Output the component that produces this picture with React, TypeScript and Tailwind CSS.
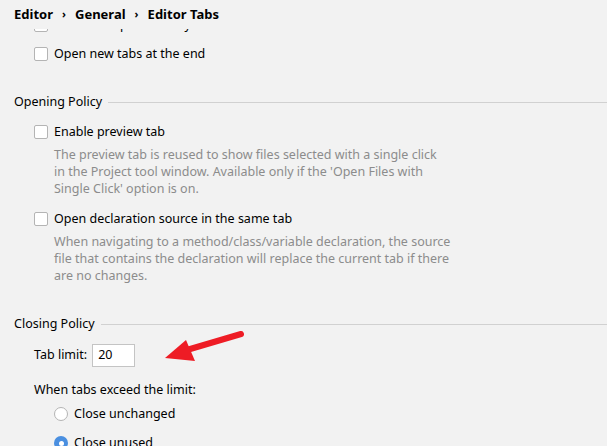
import React from "react";

function Checkbox() {
  return <div className="w-[14px] h-[14px] rounded-[2px] border border-[#b4b4b4] bg-white shrink-0" />;
}

function CheckRow({ label, className = "" }: { label: string; className?: string }) {
  return (
    <div className={`flex items-center h-[20px] pl-[34px] ${className}`}>
      <Checkbox />
      <span className="ml-[6px] text-black whitespace-nowrap">{label}</span>
    </div>
  );
}

function SectionTitle({ label, className = "" }: { label: string; className?: string }) {
  return (
    <div className={`flex items-center h-[20px] pl-[14px] ${className}`}>
      <span className="text-black whitespace-nowrap">{label}</span>
      <div className="flex-1 h-px bg-[#d1d1d1] ml-[6px]" />
    </div>
  );
}

function Desc({ lines, className = "" }: { lines: string[]; className?: string }) {
  return (
    <div className={`pl-[54px] text-[#8c8c8c] leading-[17px] ${className}`}>
      {lines.map((l) => (
        <div key={l} className="whitespace-nowrap">{l}</div>
      ))}
    </div>
  );
}

function Radio({ checked }: { checked?: boolean }) {
  if (checked) {
    return (
      <div className="w-[14px] h-[14px] rounded-full bg-[#4a8fe0] flex items-center justify-center shrink-0">
        <div className="w-[5px] h-[5px] rounded-full bg-white" />
      </div>
    );
  }
  return <div className="w-[14px] h-[14px] rounded-full border border-[#b4b4b4] bg-white shrink-0" />;
}

export default function App() {
  return (
    <div
      className="relative w-[607px] h-[446px] bg-[#f2f2f2] overflow-hidden flex flex-col text-[12.5px]"
      style={{ fontFamily: '"Noto Sans", "Noto Sans CJK SC", sans-serif' }}
    >
      <div className="h-[29px] shrink-0 flex items-center pl-[14px] font-bold text-black text-[13px] bg-[#f2f2f2]">
        <span>Editor</span>
        <span className="mx-[9px] text-[11px]">›</span>
        <span>General</span>
        <span className="mx-[9px] text-[11px]">›</span>
        <span>Editor Tabs</span>
      </div>
      <div className="flex-1 overflow-hidden">
        <div className="mt-[-14px]">
          <CheckRow label="Sort tabs alphabetically" className="text-[#8c8c8c]" />
          <CheckRow label="Open new tabs at the end" className="mt-[9px]" />
          <SectionTitle label="Opening Policy" className="mt-[28px]" />
          <CheckRow label="Enable preview tab" className="mt-[10px]" />
          <Desc
            className="mt-[4px]"
            lines={[
              "The preview tab is reused to show files selected with a single click",
              "in the Project tool window. Available only if the 'Open Files with",
              "Single Click' option is on.",
            ]}
          />
          <CheckRow label="Open declaration source in the same tab" className="mt-[12px]" />
          <Desc
            className="mt-[4px]"
            lines={[
              "When navigating to a method/class/variable declaration, the source",
              "file that contains the declaration will replace the current tab if there",
              "are no changes.",
            ]}
          />
          <SectionTitle label="Closing Policy" className="mt-[30px]" />
          <div className="flex items-center pl-[34px] mt-[10px] h-[23px]">
            <span className="text-black">Tab limit:</span>
            <div className="ml-[5px] w-[43px] h-[23px] border border-[#c4c4c4] bg-white flex items-center pl-[5px] text-black">
              20
            </div>
          </div>
          <div className="flex items-center h-[20px] pl-[34px] mt-[13px] text-black">When tabs exceed the limit:</div>
          <div className="flex items-center h-[20px] pl-[54px] mt-[4px]">
            <Radio />
            <span className="ml-[6px] text-black">Close unchanged</span>
          </div>
          <div className="flex items-center h-[20px] pl-[54px] mt-[9px]">
            <Radio checked />
            <span className="ml-[6px] text-black">Close unused</span>
          </div>
        </div>
      </div>
      <svg className="absolute left-[160px] top-[326px]" width="90" height="40" viewBox="160 326 90 40">
        <line x1="241" y1="334" x2="180" y2="352" stroke="#ee1c25" strokeWidth="6" strokeLinecap="round" />
        <polygon points="165,358 186,340 195,361" fill="#ee1c25" />
      </svg>
    </div>
  );
}
